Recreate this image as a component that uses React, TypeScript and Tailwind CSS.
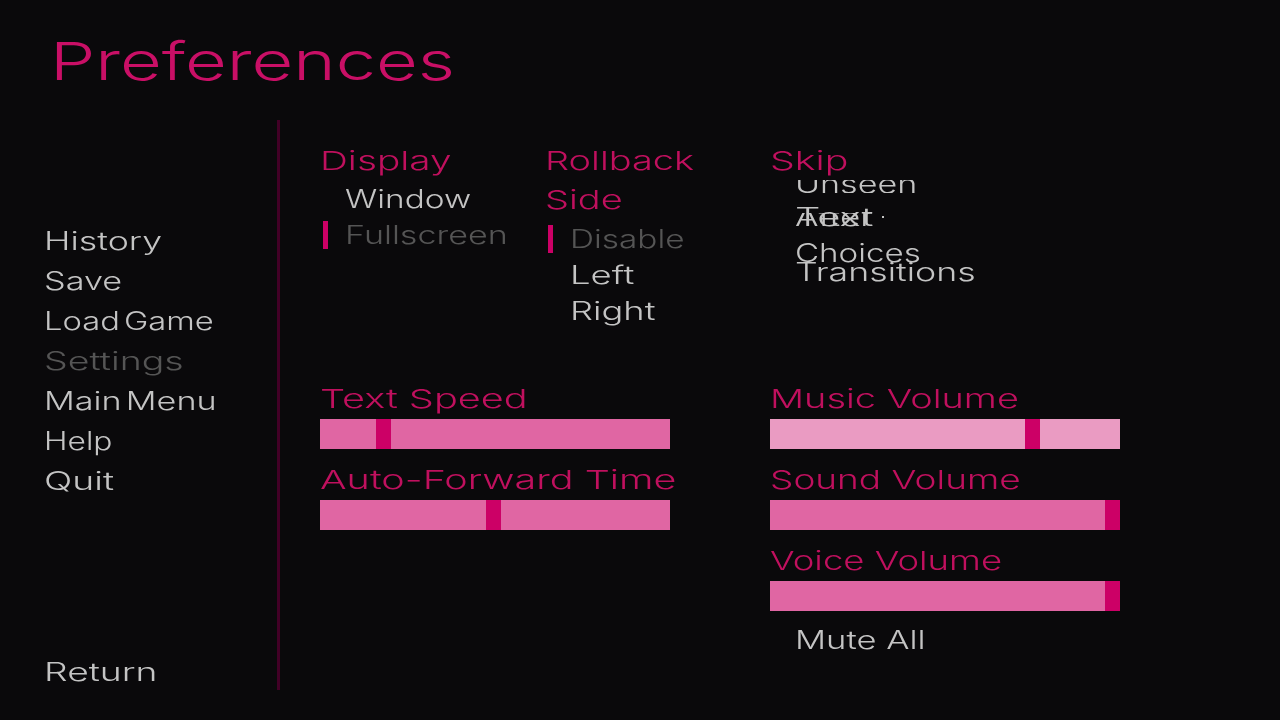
import React from "react";

const font = "[font-family:'Inter','Liberation_Sans',sans-serif] font-light";

function T({ children, className = "" }: { children: React.ReactNode; className?: string }) {
  return <span className={`block origin-left whitespace-nowrap leading-none [will-change:transform] ${className}`}>{children}</span>;
}

function Nav({ label, dim, sx }: { label: string; dim?: boolean; sx: string }) {
  return (
    <div className="h-[40px] flex items-center">
      <T className={`text-[25px] ${sx} ${dim ? "text-[#555555]" : "text-[#c4c4c4]"}`}>{label}</T>
    </div>
  );
}

function Heading({ label, sx, h = "h-[40px]" }: { label: string; sx: string; h?: string }) {
  return (
    <div className={`${h} flex items-center`}>
      <T className={`text-[26px] ${sx} text-[#c0105e]`}>{label}</T>
    </div>
  );
}

function Option({ label, selected, sx }: { label: string; selected?: boolean; sx: string }) {
  return (
    <div className="h-[36px] flex items-center pl-[3px]">
      <div className={`w-[5px] h-[28px] ${selected ? "bg-[#cc0066]" : ""}`} />
      <div className="pl-[17px]">
        <T className={`text-[25px] ${sx} ${selected ? "text-[#555555]" : "text-[#c4c4c4]"}`}>{label}</T>
      </div>
    </div>
  );
}

function Bar({ pos, light, w = "w-[350px]" }: { pos: number; light?: boolean; w?: string }) {
  return (
    <div className={`h-[30px] ${w} flex ${light ? "bg-[#ea9bc2]" : "bg-[#e066a3]"}`}>
      <div style={{ width: pos }} />
      <div className="w-[15px] h-full bg-[#cc0066]" />
    </div>
  );
}

export default function App() {
  return (
    <div className={`w-[1280px] h-[720px] bg-[#0a090b] overflow-hidden flex flex-col ${font}`}>
      <div className="h-[120px] pl-[50px] pt-[36px]">
        <T className="text-[52px] scale-x-[1.387] text-[#c90f66]">Preferences</T>
      </div>
      <div className="flex h-[600px]">
        <div className="w-[277px] pl-[44px] pt-[101px] pb-[28px] flex flex-col">
          <Nav label="History" sx="scale-x-[1.43]" />
          <Nav label="Save" sx="scale-x-[1.37]" />
          <Nav label="Load Game" sx="scale-x-[1.31] [word-spacing:-4px]" />
          <Nav label="Settings" dim sx="scale-x-[1.5]" />
          <Nav label="Main Menu" sx="scale-x-[1.368] [word-spacing:-4px]" />
          <Nav label="Help" sx="scale-x-[1.27]" />
          <Nav label="Quit" sx="scale-x-[1.49]" />
          <div className="mt-auto">
            <Nav label="Return" sx="scale-x-[1.49]" />
          </div>
        </div>
        <div className="w-[3px] h-[570px] bg-[#420026]" />
        <div className="pl-[40px] flex flex-col">
          <div className="h-[259px] pt-[21px] flex">
            <div className="w-[225px]">
              <Heading label="Display" sx="scale-x-[1.49]" />
              <Option label="Window" sx="scale-x-[1.335]" />
              <Option label="Fullscreen" selected sx="scale-x-[1.363]" />
            </div>
            <div className="w-[225px]">
              <Heading label="Rollback" sx="scale-x-[1.46]" />
              <Heading label="Side" h="h-[38px]" sx="scale-x-[1.46]" />
              <div className="mt-[2px]">
                <Option label="Disable" selected sx="scale-x-[1.335]" />
                <Option label="Left" sx="scale-x-[1.46]" />
                <Option label="Right" sx="scale-x-[1.45]" />
              </div>
            </div>
            <div className="w-[225px]">
              <Heading label="Skip" h="h-[39px]" sx="scale-x-[1.51]" />
              <div className="pl-[25px]">
                <div className="h-[13px] overflow-hidden flex items-end">
                  <T className="text-[25px] scale-x-[1.363] text-[#c4c4c4] -mb-[4px]">Unseen</T>
                </div>
                <div className="h-[48px] grid items-center">
                  <T className="col-start-1 row-start-1 text-[25px] scale-x-[1.6] text-[#c4c4c4]">Text</T>
                  <T className="col-start-1 row-start-1 text-[25px] scale-x-[1.4] text-[#c4c4c4] [clip-path:inset(8px_0_0_0)]">After</T>
                  <div className="col-start-1 row-start-1 ml-[87px] w-[2px] h-[2px] bg-[#c4c4c4]" />
                </div>
                <div className="h-[24px] flex items-center">
                  <T className="text-[25px] scale-x-[1.325] text-[#c4c4c4]">Choices</T>
                </div>
                <div className="h-[24px] -mt-[5px] flex items-center">
                  <T className="text-[25px] scale-x-[1.43] text-[#c4c4c4]">Transitions</T>
                </div>
              </div>
            </div>
          </div>
          <div className="flex">
            <div className="w-[450px]">
              <Heading label="Text Speed" sx="scale-x-[1.525]" />
              <Bar pos={56} w="w-[349.5px]" />
              <div className="mt-[10px]" />
              <Heading label="Auto-Forward Time" h="h-[41px]" sx="scale-x-[1.52]" />
              <Bar pos={166} w="w-[349.5px]" />
            </div>
            <div className="w-[350px]">
              <Heading label="Music Volume" sx="scale-x-[1.457]" />
              <Bar pos={255} light />
              <div className="mt-[10px]" />
              <Heading label="Sound Volume" h="h-[41px]" sx="scale-x-[1.423]" />
              <Bar pos={335} />
              <div className="mt-[11px]" />
              <Heading label="Voice Volume" sx="scale-x-[1.404]" />
              <Bar pos={335} />
              <div className="h-[36px] mt-[11px] pl-[25px] flex items-center">
                <T className="text-[25px] scale-x-[1.382] text-[#c4c4c4]">Mute All</T>
              </div>
            </div>
          </div>
        </div>
      </div>
    </div>
  );
}
